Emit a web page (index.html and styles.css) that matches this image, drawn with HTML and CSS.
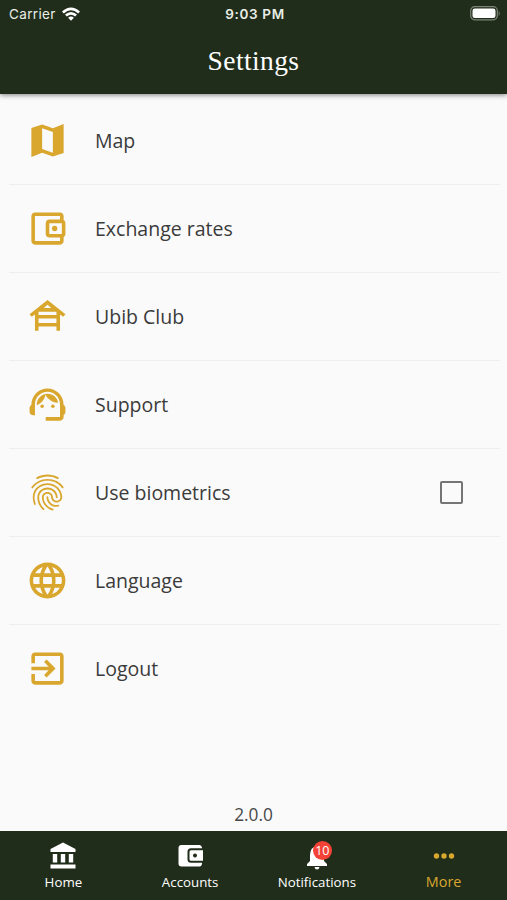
FILE: index.html
```html
<!DOCTYPE html>
<html lang="en">
<head>
<meta charset="utf-8">
<title>Settings</title>
<link rel="stylesheet" href="styles.css">
</head>
<body>
<div class="screen">
  <header class="header">
    <div class="status">
      <div class="carrier"><span>Carrier</span>
        <svg class="wifi" viewBox="0 0 18 14"><path d="M0 4.500Q9-3.600 18 4.500L16.200 6.400Q9 .2 1.800 6.400zM3 7.600Q9 2.500 15 7.600L13.100 9.500Q9 6.200 4.900 9.500zM6.100 10.700Q9 8.500 11.900 10.700L9 13.800z"/></svg>
      </div>
      <div class="time">9:03 PM</div>
      <svg class="battery" viewBox="0 0 31 15"><rect class="shell" x=".7" y=".7" width="26.600" height="13.100" rx="4"/><rect class="charge" x="2.500" y="2.500" width="23" height="9.500" rx="2.300"/><path class="tip" d="M28.700 4.700q2 2.600 0 5.200z"/></svg>
    </div>
    <h1 class="title">Settings</h1>
  </header>
  <main class="list">
    <div class="row"><svg class="icon" viewBox="0 0 24 24"><path d="M15 5.100L9 3 3 5.020v16.200l6-2.330 6 2.100 6-2.020V2.770L15 5.100zm0 13.790l-6-2.110V5.110l6 2.110v11.670z"/></svg><span class="label">Map</span></div>
    <div class="row"><svg class="icon" viewBox="0 0 24 24"><path d="M21 7.280V5c0-1.100-.9-2-2-2H5c-1.110 0-2 .9-2 2v14c0 1.100.89 2 2 2h14c1.100 0 2-.9 2-2v-2.280c.59-.35 1-.98 1-1.720V9c0-.74-.41-1.370-1-1.720zM20 9v6h-7V9h7zM5 19V5h14v2h-6c-1.100 0-2 .9-2 2v6c0 1.100.9 2 2 2h6v2H5z"/><circle cx="16" cy="12" r="1.500"/></svg><span class="label">Exchange rates</span></div>
    <div class="row"><svg class="icon" viewBox="0 0 24 24"><path fill-rule="evenodd" d="M12 2.800L22 10.700l-1.200 1.500L19 10.900V20h-2v-2.400H7V20H5v-9.100l-1.800 1.300L2 10.700zM12 5.500L9.900 7.300h4.200zM7 9.300v1.800h10V9.300zM7 13.100v2.500h10v-2.500z"/></svg><span class="label">Ubib Club</span></div>
    <div class="row"><svg class="icon" viewBox="0 0 24 24"><path d="M21 12.220C21 6.730 16.740 3 12 3c-4.690 0-9 3.650-9 9.280-.6.34-1 .98-1 1.720v2c0 1.100.9 2 2 2h1v-6.100c0-3.870 3.130-7 7-7s7 3.130 7 7V19h-8v2h8c1.100 0 2-.9 2-2v-1.220c.59-.31 1-.92 1-1.640v-2.300c0-.7-.41-1.310-1-1.620z"/><circle cx="9" cy="13" r="1"/><circle cx="15" cy="13" r="1"/><path d="M18 11.030C17.520 8.180 15.040 6 12.050 6c-3.030 0-6.290 2.510-6.030 6.450 2.470-1.010 4.330-3.210 4.860-5.890 1.310 2.630 4 4.440 7.120 4.470z"/></svg><span class="label">Support</span></div>
    <div class="row"><svg class="icon" viewBox="0 0 24 24"><path d="M17.81 4.47c-.08 0-.16-.02-.23-.06C15.66 3.42 14 3 12.01 3c-1.98 0-3.86.47-5.57 1.41-.24.13-.54.04-.68-.2-.13-.24-.04-.55.2-.68C7.82 2.52 9.86 2 12.01 2c2.13 0 3.99.47 6.03 1.52.25.13.34.43.21.67-.09.18-.26.28-.44.28zM3.5 9.72c-.1 0-.2-.03-.29-.09-.23-.16-.28-.47-.12-.7.99-1.4 2.25-2.5 3.75-3.27C9.98 4.04 14 4.03 17.15 5.65c1.5.77 2.76 1.86 3.75 3.25.16.22.11.54-.12.7-.23.16-.54.11-.7-.12-.9-1.26-2.04-2.25-3.39-2.94-2.87-1.47-6.54-1.47-9.4.01-1.36.7-2.5 1.7-3.4 2.96-.08.14-.23.21-.39.21zm6.25 12.07c-.13 0-.26-.05-.35-.15-.87-.87-1.34-1.43-2.01-2.64-.69-1.23-1.05-2.73-1.05-4.34 0-2.97 2.54-5.39 5.66-5.39s5.66 2.42 5.66 5.39c0 .28-.22.5-.5.5s-.5-.22-.5-.5c0-2.42-2.09-4.39-4.66-4.39-2.57 0-4.66 1.97-4.66 4.39 0 1.44.32 2.77.93 3.85.64 1.15 1.08 1.64 1.85 2.42.19.2.19.51 0 .71-.11.1-.24.15-.37.15zm7.17-1.85c-1.19 0-2.24-.3-3.1-.89-1.49-1.01-2.38-2.65-2.38-4.39 0-.28.22-.5.5-.5s.5.22.5.5c0 1.41.72 2.74 1.94 3.56.71.48 1.54.71 2.54.71.24 0 .64-.03 1.04-.1.27-.05.53.13.58.41.05.27-.13.53-.41.58-.57.11-1.07.12-1.21.12zM14.91 22c-.04 0-.09-.01-.13-.02-1.59-.44-2.63-1.03-3.72-2.1-1.4-1.39-2.17-3.24-2.17-5.22 0-1.62 1.38-2.94 3.08-2.94 1.7 0 3.08 1.32 3.08 2.94 0 1.07.93 1.94 2.08 1.94s2.08-.87 2.08-1.94c0-3.77-3.25-6.83-7.25-6.83-2.84 0-5.44 1.58-6.61 4.03-.39.81-.59 1.76-.59 2.8 0 .78.07 2.01.67 3.61.1.26-.03.55-.29.64-.26.1-.55-.04-.64-.29-.49-1.31-.73-2.61-.73-3.96 0-1.2.23-2.29.68-3.24 1.33-2.79 4.28-4.6 7.51-4.6 4.55 0 8.25 3.51 8.25 7.83 0 1.62-1.38 2.94-3.08 2.94s-3.08-1.32-3.08-2.94c0-1.07-.93-1.94-2.08-1.94s-2.08.87-2.08 1.94c0 1.71.66 3.31 1.87 4.51.95.94 1.86 1.46 3.27 1.85.27.07.42.35.35.61-.05.23-.26.38-.47.38z"/></svg><span class="label">Use biometrics</span><span class="checkbox" role="checkbox" aria-checked="false"></span></div>
    <div class="row"><svg class="icon" viewBox="0 0 24 24"><path d="M11.99 2C6.47 2 2 6.48 2 12s4.47 10 9.99 10C17.52 22 22 17.52 22 12S17.52 2 11.99 2zm6.93 6h-2.95c-.32-1.25-.78-2.45-1.38-3.56 1.84.63 3.37 1.91 4.33 3.56zM12 4.04c.83 1.2 1.48 2.53 1.91 3.96h-3.82c.43-1.43 1.08-2.76 1.91-3.96zM4.26 14C4.1 13.36 4 12.69 4 12s.1-1.36.26-2h3.38c-.08.66-.14 1.32-.14 2s.06 1.34.14 2H4.26zm.82 2h2.95c.32 1.25.78 2.45 1.38 3.56-1.84-.63-3.37-1.9-4.33-3.56zm2.95-8H5.08c.96-1.66 2.49-2.93 4.33-3.56C8.81 5.55 8.35 6.75 8.03 8zM12 19.96c-.83-1.2-1.48-2.53-1.91-3.96h3.82c-.43 1.43-1.08 2.76-1.91 3.96zM14.34 14H9.66c-.09-.66-.16-1.32-.16-2s.07-1.35.16-2h4.68c.09.65.16 1.32.16 2s-.07 1.34-.16 2zm.25 5.56c.6-1.11 1.06-2.31 1.38-3.56h2.95c-.96 1.65-2.49 2.93-4.33 3.56zM16.36 14c.08-.66.14-1.32.14-2s-.06-1.34-.14-2h3.38c.16.64.26 1.31.26 2s-.1 1.36-.26 2h-3.38z"/></svg><span class="label">Language</span></div>
    <div class="row"><svg class="icon" viewBox="0 0 24 24"><path d="M10.09 15.59L11.5 17l5-5-5-5-1.41 1.41L12.67 11H3v2h9.67l-2.58 2.59zM19 3H5c-1.11 0-2 .9-2 2v4h2V5h14v14H5v-4H3v4c0 1.1.89 2 2 2h14c1.1 0 2-.9 2-2V5c0-1.1-.9-2-2-2z"/></svg><span class="label">Logout</span></div>
  </main>
  <div class="version">2.0.0</div>
  <nav class="tabs">
    <div class="tab"><svg class="tab-icon" viewBox="0 0 28 28"><path d="M14 .5L26.500 7v3h-25V7zM3.800 12h4.400v8.500H3.800zM11.800 12h4.400v8.500h-4.400zM19.800 12h4.400v8.500h-4.400zM1.500 22.500h25v4h-25z"/></svg><span>Home</span></div>
    <div class="tab"><svg class="tab-icon" viewBox="0 0 28 28"><path d="M5.500 3h18q2 0 2.500 2.500v.7H15q-3.500 0-3.500 3.500v7.500q0 3.500 3.500 3.500h11v1.300q-.5 2.500-2.500 2.500h-18q-3 0-3-3V6q0-3 3-3z"/><path fill-rule="evenodd" d="M15 8.200h12v10.600H15q-1.500 0-1.500-1.500V9.700q0-1.500 1.500-1.500zm4 3.300a2 2 0 1 0 .01 0z"/></svg><span>Accounts</span></div>
    <div class="tab"><div class="bell"><svg class="tab-icon" viewBox="0 0 28 28"><path d="M14 4q-7 1-7 9v6l-3 3v2h20v-2l-3-3v-6q0-8-7-9zM11.500 25h5q-.5 2.500-2.500 2.500t-2.500-2.500z"/></svg><span class="badge">10</span></div><span>Notifications</span></div>
    <div class="tab tab-active"><svg class="tab-icon" viewBox="0 0 28 28"><circle cx="6.500" cy="14" r="2.700"/><circle cx="14" cy="14" r="2.700"/><circle cx="21.500" cy="14" r="2.700"/></svg><span>More</span></div>
  </nav>
</div>
</body>
</html>
```
FILE: styles.css
```css
* { box-sizing: border-box; }
body { margin: 0; background: #fafafa; font-family: "Open Sans", sans-serif; }
.screen { height: 900px; display: flex; flex-direction: column; }
.header { height: 94px; background: #212d1b; color: #fff; box-shadow: 0 1px 5px rgba(0,0,0,.5); }
.status { height: 27px; padding: 0 6px 0 9px; display: grid; grid-template-columns: 1fr auto 1fr; align-items: center; font-family: Inter, sans-serif; font-size: 13.5px; color: #e9eee6; }
.carrier { display: flex; align-items: center; gap: 6px; letter-spacing: .35px; }
.wifi { width: 18px; height: 14px; fill: #fff; }
.time { font-weight: 600; letter-spacing: .65px; }
.battery { width: 31px; height: 15px; justify-self: end; }
.shell { fill: none; stroke: #7c8478; stroke-width: 1.2; }
.charge { fill: #fff; }
.tip { fill: #7c8478; }
.title { margin: 0; text-align: center; font: 400 27.5px/67px "Liberation Serif", serif; letter-spacing: .4px; }
.list { padding: 3px 7px 0 9px; }
.row { height: 88px; padding: 0 37px 0 17px; display: flex; align-items: center; border-bottom: 1px solid #eee; }
.row:last-child { border-bottom-color: transparent; }
.icon { width: 43px; height: 43px; fill: #d9a62e; }
.label { margin-left: 26px; font-size: 19.5px; line-height: 26px; color: #3b3b3b; }
.checkbox { width: 23px; height: 23px; margin-left: auto; border: 2px solid #757575; border-radius: 2px; }
.version { margin-top: auto; height: 33px; line-height: 34px; text-align: center; font-size: 17.3px; color: #484848; }
.tabs { height: 69px; display: grid; grid-template-columns: repeat(4, 1fr); background: #212d1b; }
.tab { display: flex; flex-direction: column; align-items: center; padding-top: 11px; font-size: 13.3px; line-height: 18px; gap: 3px; color: #fff; }
.tab-icon { display: block; width: 28px; height: 28px; fill: currentColor; }
.tab-active { color: #d9a62e; font-size: 14.4px; }
.bell { position: relative; }
.badge { position: absolute; left: 10px; top: -1px; width: 19px; height: 19px; border-radius: 50%; background: #f44336; color: #fff; font-size: 12.5px; line-height: 19px; text-align: center; }
```
